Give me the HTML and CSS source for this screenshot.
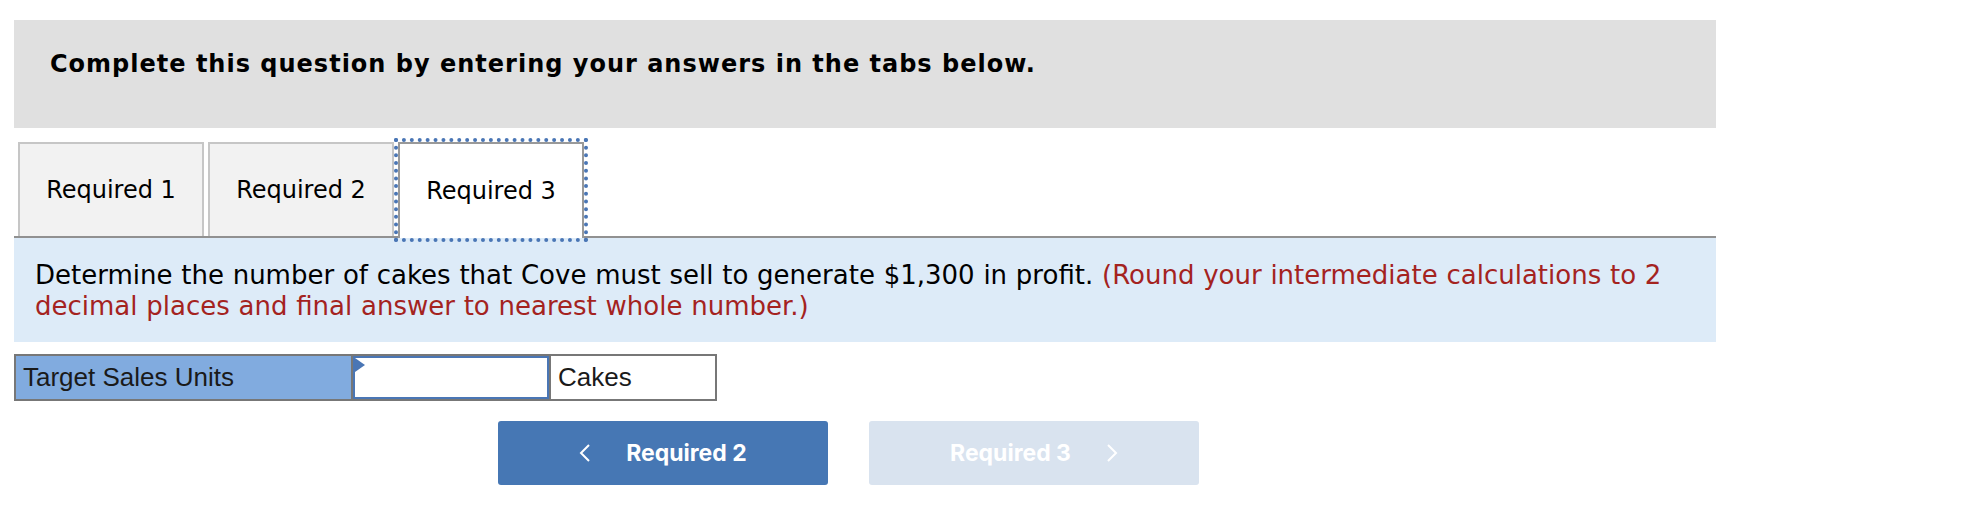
FILE: index.html
```html
<!DOCTYPE html>
<html lang="en">
<head>
<meta charset="utf-8">
<title>Required 3</title>
<link rel="stylesheet" href="styles.css">
</head>
<body>
<div class="page">
  <div class="instructions">
    <p class="instructions-text">Complete this question by entering your answers in the tabs below.</p>
  </div>

  <div class="tabs">
    <div class="tab">Required 1</div>
    <div class="tab">Required 2</div>
    <div class="tab tab-active">Required 3</div>
  </div>

  <div class="question">
    Determine the number of cakes that Cove must sell to generate $1,300 in profit. <span class="hint">(Round your intermediate calculations to 2 decimal places and final answer to nearest whole number.)</span>
  </div>

  <div class="answer-row">
    <div class="cell cell-label">Target Sales Units</div>
    <div class="cell cell-input"><span class="flag"></span></div>
    <div class="cell cell-unit">Cakes</div>
  </div>

  <div class="nav">
    <div class="nav-btn nav-prev">
      <svg class="chev" width="12" height="18" viewBox="0 0 12 18"><polyline points="10,1 2,9 10,17" fill="none" stroke="#fff" stroke-width="2"/></svg>
      <span>Required 2</span>
    </div>
    <div class="nav-btn nav-next">
      <span>Required 3</span>
      <svg class="chev" width="12" height="18" viewBox="0 0 12 18"><polyline points="2,1 10,9 2,17" fill="none" stroke="#fff" stroke-width="2"/></svg>
    </div>
  </div>
</div>
</body>
</html>
```

FILE: styles.css
```css
html, body {
  margin: 0;
  padding: 0;
  background: #ffffff;
}

.page {
  padding: 20px 0 0 14px;
  width: 1702px;
  font-family: "DejaVu Sans", Verdana, sans-serif;
  color: #000;
}

.instructions {
  background: #e0e0e0;
  height: 108px;
  box-sizing: border-box;
  padding: 31px 0 0 36px;
}

.instructions-text {
  margin: 0;
  font-weight: bold;
  font-size: 24px;
  letter-spacing: 1px;
  line-height: 27px;
}

.tabs {
  display: flex;
  gap: 4px;
  padding-left: 4px;
  margin-top: 14px;
  border-bottom: 2px solid #919191;
  height: 94px;
}

.tab {
  width: 186px;
  height: 94px;
  box-sizing: border-box;
  background: #f2f2f2;
  border: 2px solid #c6c6c6;
  border-bottom: none;
  display: flex;
  align-items: center;
  justify-content: center;
  font-size: 24px;
}

.tab-active {
  background: #ffffff;
  border-color: #999999;
  height: 96px;
  outline: 4px dotted #4a76b5;
  position: relative;
}

.question {
  background: #ddebf8;
  padding: 22px 21px 18px 21px;
  font-size: 26px;
  line-height: 31px;
  word-spacing: 0.5px;
  height: 104px;
  box-sizing: border-box;
}

.hint {
  color: #a4231f;
}

.answer-row {
  display: flex;
  margin-top: 12px;
  width: 703px;
  height: 47px;
  box-sizing: border-box;
  border: 2px solid #777777;
  font-family: "Liberation Sans", Arial, sans-serif;
  font-size: 26px;
  color: #1a1a1a;
}

.cell {
  display: flex;
  align-items: center;
  box-sizing: border-box;
}

.cell-label {
  width: 337px;
  background: #81abdf;
  padding-left: 7px;
  border-right: 2px solid #777777;
}

.cell-input {
  width: 196px;
  background: #fff;
  border: 2px solid #4a76b5;
  position: relative;
}

.flag {
  position: absolute;
  left: 0;
  top: 0;
  width: 0;
  height: 0;
  border-top: 7px solid transparent;
  border-bottom: 7px solid transparent;
  border-left: 10px solid #4a76b5;
}

.cell-unit {
  flex: 1;
  border-left: 2px solid #777777;
  padding-left: 7px;
  background: #fff;
}

.nav {
  display: flex;
  gap: 41px;
  margin-top: 20px;
  padding-left: 484px;
}

.nav-btn {
  width: 330px;
  height: 64px;
  border-radius: 3px;
  display: flex;
  align-items: center;
  justify-content: center;
  gap: 35px;
  font-family: Inter, Roboto, "Liberation Sans", sans-serif;
  font-weight: bold;
  font-size: 23px;
  color: #ffffff;
}

.nav-prev {
  background: #4677b4;
}

.nav-next {
  background: #d9e3ef;
}

.chev {
  display: block;
}
```
